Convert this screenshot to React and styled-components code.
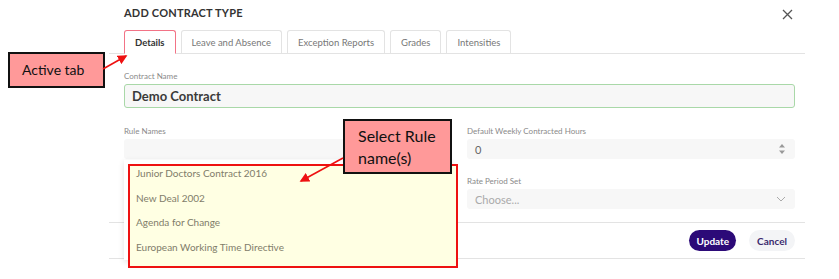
import React from 'react';
import styled, { createGlobalStyle } from 'styled-components';

const GlobalStyle = createGlobalStyle`
  html, body {
    margin: 0;
    padding: 0;
    background: #fff;
  }
  body {
    font-family: 'Lato', 'Noto Sans', sans-serif;
    color: #333;
  }
`;

const Page = styled.div`
  position: relative;
  width: 839px;
  height: 279px;
  overflow: hidden;
`;

const Dialog = styled.div`
  margin-left: 109px;
  width: 696px;
  display: flex;
  flex-direction: column;
`;

const Header = styled.div`
  height: 30px;
  display: flex;
  align-items: flex-start;
  justify-content: space-between;
  padding: 6px 12px 0 15px;
  box-sizing: border-box;
`;

const Title = styled.h2`
  margin: 0;
  font-size: 11px;
  font-weight: 700;
  letter-spacing: 0.2px;
  color: #333;
`;

const Close = styled.button`
  border: 0;
  background: none;
  padding: 0;
  margin-top: 2px;
  width: 12px;
  height: 12px;
  color: #555;
`;

const TabBar = styled.div`
  display: flex;
  gap: 5px;
  padding-left: 15px;
  border-bottom: 1px solid #e3e3e3;
  height: 23px;
`;

const Tab = styled.div`
  display: flex;
  align-items: center;
  padding: 0 ${p => p.$pad}px;
  font-size: 9.5px;
  font-weight: ${p => (p.$active ? 700 : 400)};
  color: ${p => (p.$active ? '#333' : '#777')};
  border: 1px solid ${p => (p.$active ? '#f27386' : '#e3e3e3')};
  border-bottom: ${p => (p.$active ? '1px solid #fff' : '0')};
  margin-bottom: ${p => (p.$active ? '-1px' : '0')};
  border-radius: 3px 3px 0 0;
  background: #fff;
`;

const Body = styled.div`
  padding: 17px 10px 0 15px;
  display: flex;
  flex-direction: column;
`;

const Label = styled.div`
  font-size: 8px;
  color: #8a8a8a;
  height: 10px;
  line-height: 10px;
  margin-bottom: 3px;
`;

const NameInput = styled.div`
  height: 24px;
  box-sizing: border-box;
  border: 1px solid #a9d8a8;
  border-radius: 3px;
  background: #f7f7f7;
  display: flex;
  align-items: center;
  padding-left: 7px;
  font-size: 13px;
  font-weight: 700;
  color: #3a3a3a;
`;

const Grid = styled.div`
  display: grid;
  grid-template-columns: 328px 328px;
  column-gap: 15px;
  margin-top: 18px;
`;

const Field = styled.div`
  display: flex;
  flex-direction: column;
  grid-column: ${p => p.$col};
  margin-bottom: ${p => p.$mb || 0}px;
`;

const Box = styled.div`
  height: 20px;
  background: #f7f7f7;
  border-radius: 3px;
  display: flex;
  align-items: center;
  justify-content: space-between;
  padding: 0 9px 0 8px;
  font-size: 11px;
  color: ${p => (p.$muted ? '#aaa' : '#666')};
`;

const Footer = styled.div`
  margin-top: 13px;
  border-top: 1px solid #e3e3e3;
  border-bottom: 1px solid #e3e3e3;
  height: 35px;
  display: flex;
  align-items: center;
  justify-content: flex-end;
  gap: 13px;
  padding-right: 10px;
`;

const Btn = styled.button`
  height: 21px;
  border: 0;
  border-radius: 11px;
  padding: 0 ${p => p.$pad}px;
  font-family: inherit;
  font-size: 10px;
  font-weight: 700;
  background: ${p => (p.$primary ? '#2c0a78' : '#f3f4f6')};
  color: ${p => (p.$primary ? '#fff' : '#3b2a6e')};
`;

const Menu = styled.div`
  position: absolute;
  left: 124px;
  top: 160px;
  width: 328px;
  height: 100px;
  background: #fff;
  box-shadow: 0 2px 6px rgba(0, 0, 0, 0.12);
`;

const Highlight = styled.div`
  position: absolute;
  left: 128px;
  top: 164px;
  width: 330px;
  height: 104px;
  box-sizing: border-box;
  border: 2px solid #ee1111;
  background: #ffffe3;
  display: flex;
  flex-direction: column;
  padding: 2px 0 0 6px;
`;

const Option = styled.div`
  height: 25.5px;
  line-height: 10px;
  font-size: 10px;
  color: #7f7d6a;
`;

const Callout = styled.div`
  position: absolute;
  left: ${p => p.$x}px;
  top: ${p => p.$y}px;
  width: ${p => p.$w}px;
  height: ${p => p.$h}px;
  box-sizing: border-box;
  border: 2px solid #111;
  background: #ff9999;
  font-family: 'Lato', 'Liberation Sans', sans-serif;
  font-size: ${p => p.$fs}px;
  line-height: 22px;
  color: #111;
  padding: ${p => p.$pad};
`;

const Arrows = styled.svg`
  position: absolute;
  left: 0;
  top: 0;
  pointer-events: none;
`;

const Spin = () => (
  <svg width="8" height="12" viewBox="0 0 8 12">
    <path d="M4 1 L7 4.5 H1 Z" fill="#999" />
    <path d="M4 11 L7 7.5 H1 Z" fill="#999" />
  </svg>
);

const Chevron = () => (
  <svg width="10" height="6" viewBox="0 0 10 6">
    <path d="M1 1 L5 5 L9 1" fill="none" stroke="#aaa" strokeWidth="1" />
  </svg>
);

const tabs = [
  { label: 'Details', pad: 10, active: true },
  { label: 'Leave and Absence', pad: 10 },
  { label: 'Exception Reports', pad: 10 },
  { label: 'Grades', pad: 10 },
  { label: 'Intensities', pad: 10 },
];

const rules = [
  'Junior Doctors Contract 2016',
  'New Deal 2002',
  'Agenda for Change',
  'European Working Time Directive',
];

export default function App() {
  return (
    <Page>
      <GlobalStyle />
      <Dialog>
        <Header>
          <Title>ADD CONTRACT TYPE</Title>
          <Close aria-label="close">
            <svg width="11" height="11" viewBox="0 0 11 11">
              <path d="M1 1 L10 10 M10 1 L1 10" stroke="#555" strokeWidth="1.3" />
            </svg>
          </Close>
        </Header>
        <TabBar>
          {tabs.map(t => (
            <Tab key={t.label} $active={t.active} $pad={t.pad}>{t.label}</Tab>
          ))}
        </TabBar>
        <Body>
          <Label>Contract Name</Label>
          <NameInput>Demo Contract</NameInput>
          <Grid>
            <Field $col={1} $mb={17}>
              <Label>Rule Names</Label>
              <Box />
            </Field>
            <Field $col={2} $mb={17}>
              <Label>Default Weekly Contracted Hours</Label>
              <Box>0<Spin /></Box>
            </Field>
            <Field $col={2}>
              <Label>Rate Period Set</Label>
              <Box $muted>Choose...<Chevron /></Box>
            </Field>
          </Grid>
        </Body>
        <Footer>
          <Btn $primary $pad={7}>Update</Btn>
          <Btn $pad={8}>Cancel</Btn>
        </Footer>
      </Dialog>

      <Menu />
      <Highlight>
        {rules.map(r => (
          <Option key={r}>{r}</Option>
        ))}
      </Highlight>

      <Callout $x={8} $y={52} $w={97} $h={36} $fs={14} $pad="5px 0 0 12px">Active tab</Callout>
      <Callout $x={343} $y={119} $w={109} $h={55} $fs={16} $pad="4px 0 0 13px">
        Select Rule<br />name(s)
      </Callout>

      <Arrows width="839" height="279">
        <defs>
          <marker id="head" markerWidth="6" markerHeight="6" refX="5" refY="3" orient="auto">
            <path d="M0 0 L6 3 L0 6 Z" fill="#ee1111" />
          </marker>
        </defs>
        <line x1="103" y1="69" x2="126" y2="56" stroke="#ee1111" strokeWidth="1.6" markerEnd="url(#head)" />
        <line x1="343" y1="158" x2="301" y2="181" stroke="#ee1111" strokeWidth="1.6" markerEnd="url(#head)" />
      </Arrows>
    </Page>
  );
}
